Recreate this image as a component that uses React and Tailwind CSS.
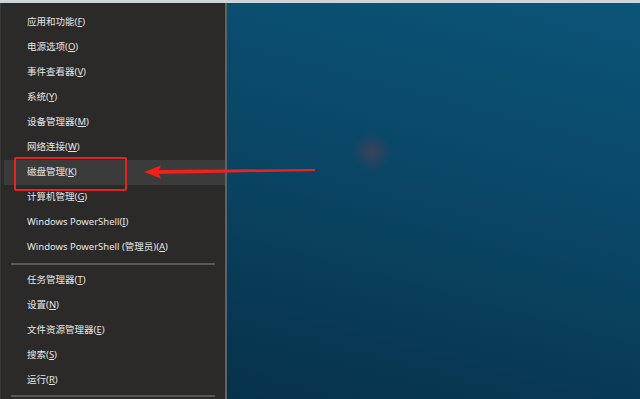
import React from "react";

const group1 = [
  ["应用和功能", "F"],
  ["电源选项", "O"],
  ["事件查看器", "V"],
  ["系统", "Y"],
  ["设备管理器", "M"],
  ["网络连接", "W"],
  ["磁盘管理", "K"],
  ["计算机管理", "G"],
  ["Windows PowerShell", "I"],
  ["Windows PowerShell (管理员)", "A"],
];
const group2 = [
  ["任务管理器", "T"],
  ["设置", "N"],
  ["文件资源管理器", "E"],
  ["搜索", "S"],
  ["运行", "R"],
];

function Item({ label, k, active }) {
  return (
    <div
      className={
        "h-[25px] flex items-center pl-[26px] text-[9.5px] text-[#e6e6e6] " +
        (active ? "bg-[#3b3b3b] ml-[3px]" : "")
      }
    >
      <span className={active ? "-ml-[3px]" : ""}>
        {label}(<span className="underline underline-offset-1">{k}</span>)
      </span>
    </div>
  );
}

export default function App() {
  return (
    <div className="relative w-[640px] h-[399px] overflow-hidden flex flex-col font-['Noto_Sans','Noto_Sans_CJK_SC',sans-serif]">
      <div className="h-[3px] bg-[#cdd5da]" />
      <div className="flex flex-1">
        <div className="w-[225px] bg-[#2b2a29] border-l border-[#3a3a3a] flex flex-col pt-[7px]">
          {group1.map(([l, k], i) => (
            <Item key={l + k} label={l} k={k} active={i === 6} />
          ))}
          <div className="mx-[10px] mt-[3px] mb-[3px] h-[2px] bg-[#5a5a5a]" />
          {group2.map(([l, k]) => (
            <Item key={l + k} label={l} k={k} />
          ))}
          <div className="mx-[10px] mt-[2px] h-[2px] bg-[#555555]" />
        </div>
        <div className="w-[2px] bg-[#5d6266]" />
        <div className="flex-1 bg-[radial-gradient(circle_at_145px_149px,rgba(170,50,60,0.3),transparent_20px),linear-gradient(195deg,#0a5579_0%,#0a4565_50%,#07314a_100%)]" />
      </div>

      <div className="absolute left-[14px] top-[157px] w-[113px] h-[34px] border-2 border-[#e3261d] rounded-[2px]" />

      <svg
        className="absolute left-[143px] top-[163px]"
        width="176"
        height="18"
        viewBox="0 0 176 18"
      >
        <polygon points="1,9 18,2.5 15,9 18,15.5" fill="#f0201a" />
        <polygon points="14,7 172,6 172,8 14,11" fill="#f0201a" />
      </svg>
    </div>
  );
}
